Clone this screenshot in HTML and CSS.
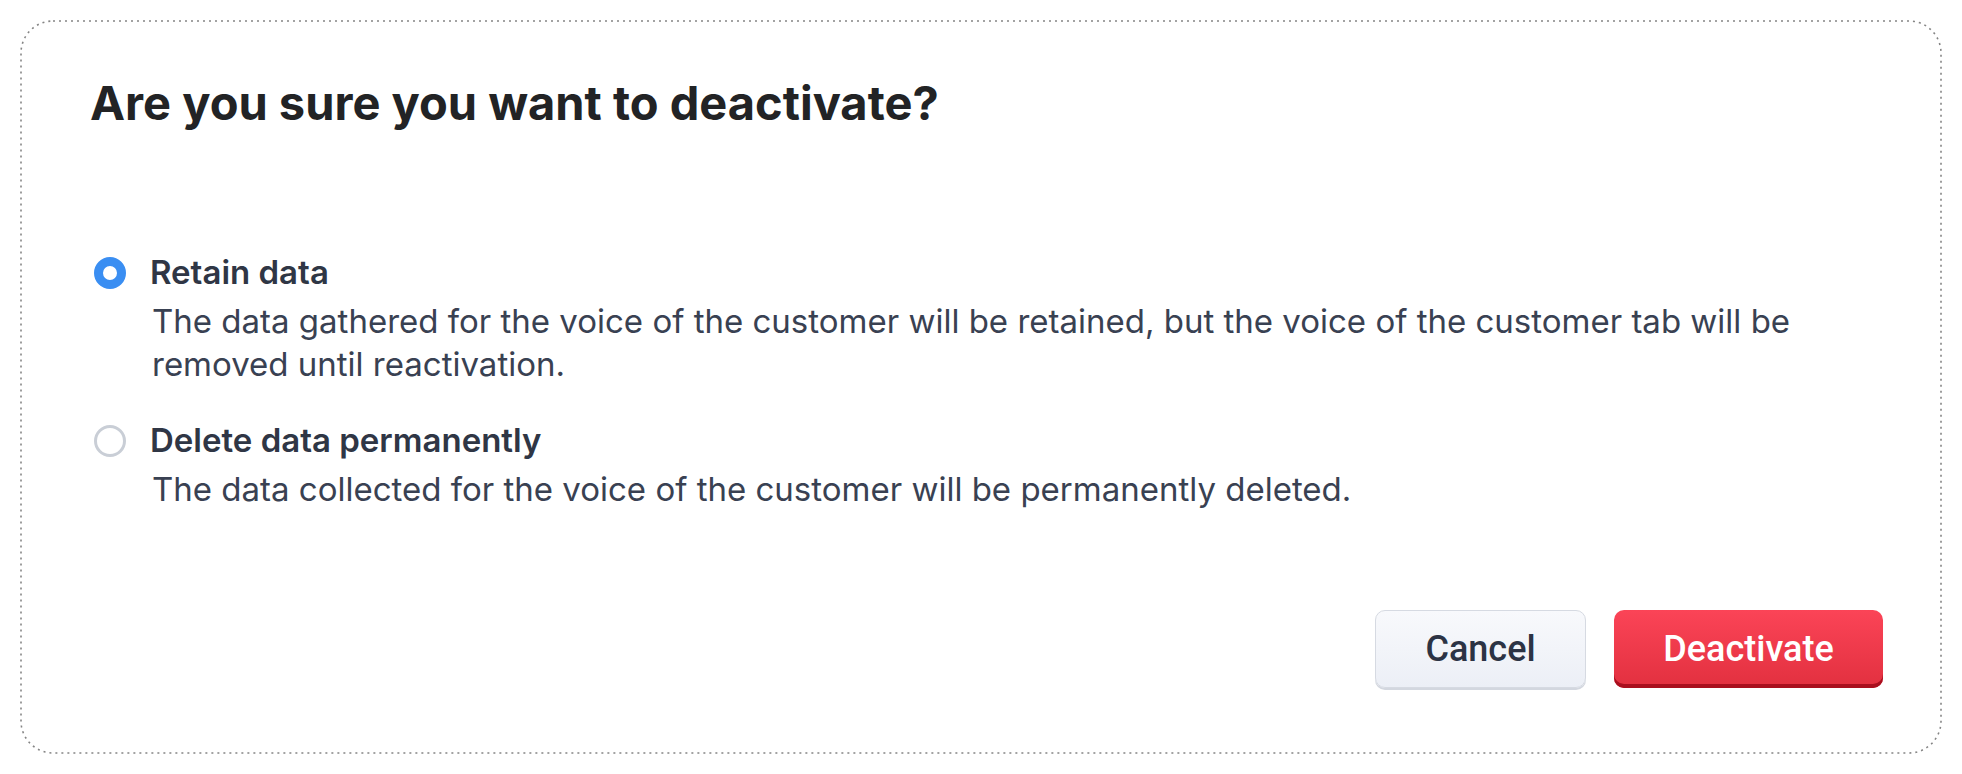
FILE: index.html
```html
<!DOCTYPE html>
<html lang="en">

<head>
    <meta charset="UTF-8">
    <meta name="viewport" content="width=device-width, initial-scale=1.0">
    <title>Deactivate</title>
    <link rel="stylesheet" href="styles.css">
</head>

<body>
    <div class="dialog">
        <!-- dotted outline drawn as svg so the dot spacing matches -->
        <svg class="dialog-outline" width="1922" height="734" aria-hidden="true">
            <rect x="1" y="1" width="1920" height="732" rx="32" ry="32" />
        </svg>

        <h1 class="dialog-title">Are you sure you want to deactivate?</h1>

        <div class="options">
            <label class="option">
                <input type="radio" name="deactivate-mode" value="retain" checked>
                <span class="radio-mark"></span>
                <span class="option-text">
                    <span class="option-label">Retain data</span>
                    <span class="option-desc">The data gathered for the voice of the customer will be retained, but the voice of the customer tab will be removed until reactivation.</span>
                </span>
            </label>
            <label class="option">
                <input type="radio" name="deactivate-mode" value="delete">
                <span class="radio-mark"></span>
                <span class="option-text">
                    <span class="option-label">Delete data permanently</span>
                    <span class="option-desc">The data collected for the voice of the customer will be permanently deleted.</span>
                </span>
            </label>
        </div>

        <div class="dialog-footer">
            <button type="button" class="btn btn-cancel">Cancel</button>
            <button type="button" class="btn btn-danger">Deactivate</button>
        </div>
    </div>
</body>

</html>
```

FILE: styles.css
```css
* {
    box-sizing: border-box;
}

body {
    margin: 0;
    background-color: #fff;
    font-family: Inter, "Noto Sans", sans-serif;
}

.dialog {
    position: relative;
    margin: 20px;
    height: 734px;
    padding: 55px 59px 0 70px;
    display: flex;
    flex-direction: column;
}

.dialog-outline {
    position: absolute;
    top: 0;
    left: 0;
    pointer-events: none;
}

.dialog-outline rect {
    fill: none;
    stroke: #858585;
    stroke-width: 1.6;
    stroke-dasharray: 2 4;
}

.dialog-title {
    margin: 0;
    font-size: 47px;
    line-height: 56px;
    font-weight: 700;
    color: #222325;
}

.options {
    margin-top: 121px;
    display: flex;
    flex-direction: column;
    gap: 34px;
}

.option {
    display: grid;
    grid-template-columns: 60px 1fr;
    cursor: pointer;
}

.option input {
    display: none;
}

.radio-mark {
    margin: 5px 0 0 4px;
    width: 32px;
    height: 32px;
    border-radius: 50%;
    border: 3px solid #c9ced6;
    background-color: #fff;
}

.option input:checked + .radio-mark {
    border: 9px solid #3a8ef2;
}

.option-text {
    display: flex;
    flex-direction: column;
    gap: 8px;
}

.option-label {
    font-size: 33px;
    line-height: 40px;
    font-weight: 600;
    color: #2f3645;
}

.option-desc {
    padding-left: 2px;
    font-size: 33px;
    line-height: 43px;
    color: #394152;
}

.dialog-footer {
    margin-top: auto;
    margin-bottom: 66px;
    display: flex;
    justify-content: flex-end;
    gap: 28px;
}

.btn {
    height: 78px;
    border-radius: 10px;
    font-family: Roboto, "Liberation Sans", sans-serif;
    font-size: 36px;
    font-weight: 500;
    cursor: pointer;
}

.btn-cancel {
    width: 211px;
    color: #2c3344;
    background: linear-gradient(#f8f9fc, #eceff6);
    border: 1.5px solid #d6dae2;
    box-shadow: 0 2px 0 #d3d7df;
}

.btn-danger {
    width: 269px;
    color: #fff;
    background: linear-gradient(#fb4457, #e2303f);
    border: none;
    box-shadow: inset 0 -4px 0 #a90f1e;
}
```
